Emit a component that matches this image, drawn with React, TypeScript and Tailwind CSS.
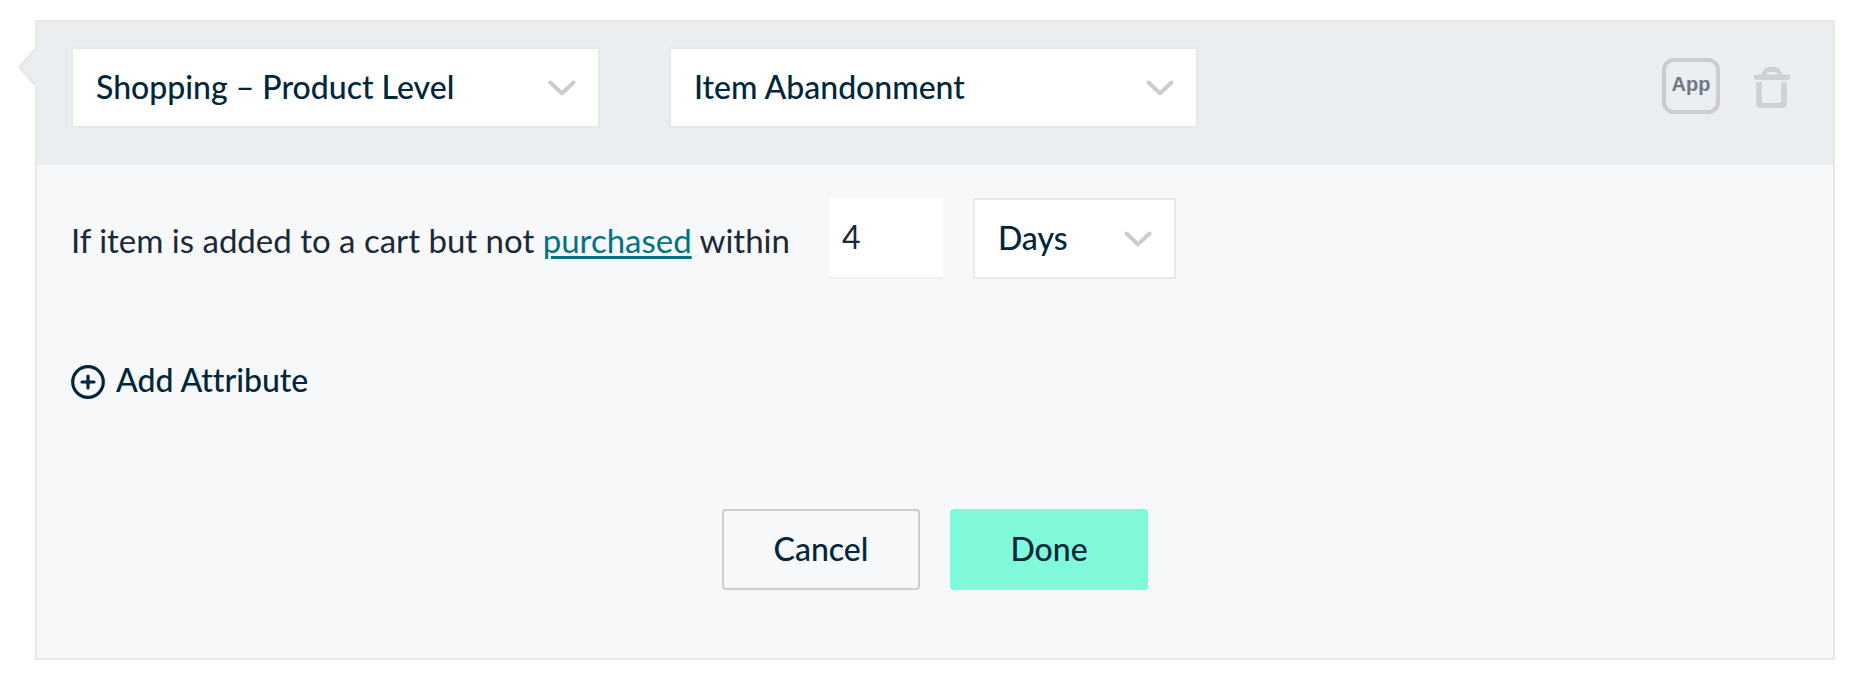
import { useState } from "react";
import type { ReactNode } from "react";

function Chevron() {
  return (
    <svg
      className="pointer-events-none absolute top-1/2 right-6 h-4 w-7 -translate-y-1/2"
      viewBox="0 0 28 16"
      fill="none"
      stroke="#cccccc"
      strokeWidth="4"
      strokeLinecap="round"
      strokeLinejoin="round"
      aria-hidden="true"
    >
      <path d="M2.5 2.5 14 13.4 25.5 2.5" />
    </svg>
  );
}

type SelectProps = {
  label: string;
  options: string[];
  className: string;
};

function Select({ label, options, className }: SelectProps) {
  return (
    <div className={`relative ${className}`}>
      <select
        aria-label={label}
        className="h-[81px] w-full appearance-none rounded-none border-2 border-[#e8e8e8] bg-white pr-14 pb-0.5 pl-[23px] text-[32px] font-medium text-[#00263a]"
      >
        {options.map((option) => (
          <option key={option}>{option}</option>
        ))}
      </select>
      <Chevron />
    </div>
  );
}

function ActionButton({ className, children }: { className: string; children: ReactNode }) {
  return (
    <button
      type="button"
      className={`h-[81px] w-[198px] rounded pb-0.5 text-[32px] font-medium text-[#00263a] ${className}`}
    >
      {children}
    </button>
  );
}

export default function App() {
  const [amount, setAmount] = useState("4");

  return (
    <main className="bg-white py-5 pr-[21px] pl-[35px] font-['Lato','Open_Sans',sans-serif] [font-variant-ligatures:none]">
      <section className="relative border-2 border-[#e8e8e8] bg-[#f7f8fa]">
        <svg
          className="absolute top-[25px] -left-[20px] h-10 w-5"
          viewBox="0 0 20 40"
          aria-hidden="true"
        >
          <path d="M20 0 18 2 2.5 20 18 38 20 40Z" fill="#ebeef1" />
          <path d="M18 2 2.5 20 18 38" fill="none" stroke="#e8e8e8" strokeWidth="2.5" />
        </svg>

        <header className="flex items-start justify-between bg-[#ebeef1] px-[34px] pt-[25px] pb-[37px]">
          <div className="flex gap-[69px]">
            <Select
              label="Event category"
              options={["Shopping – Product Level", "Shopping – Category Level"]}
              className="w-[529px]"
            />
            <Select
              label="Event"
              options={["Item Abandonment", "Item Purchase"]}
              className="w-[529px]"
            />
          </div>
          <div className="flex items-center gap-[34px] pt-[11px] pr-[9px]">
            <span className="flex h-14 w-[58px] justify-center rounded-xl border-4 border-[#cccccc] pt-[9px] font-['Liberation_Sans',sans-serif] text-[20px] leading-[26px] font-bold text-[#717784]">
              App
            </span>
            <button type="button" aria-label="Delete rule">
              <svg className="h-11 w-9" viewBox="0 0 36 44" fill="#cdd1d4" aria-hidden="true">
                <path d="M8 11C8 5.500 12 3 16 3h4c4 0 8 2.500 8 8h-4C23.500 9 22 8 20 8h-4c-2 0-3.500 1-4 3Z" />
                <rect x="0" y="10.500" width="36" height="5.500" rx="2.500" />
                <path d="M2.200 18h5.600V37q0 2 2 2h15.400q2 0 2-2V18h5.600V39q0 5-5 5H7.200q-5 0-5-5Z" />
              </svg>
            </button>
          </div>
        </header>

        <div className="px-[34px] pt-[33px] pb-[68px]">
          <div className="flex items-center">
            <p className="pt-1 text-[33px] text-[#1b2838]">
              If item is added to a cart but not{" "}
              <a
                href="#purchased"
                className="text-[#007380] underline decoration-[3px] underline-offset-[3px]"
              >
                purchased
              </a>{" "}
              within
            </p>
            <input
              aria-label="Amount of time"
              type="text"
              inputMode="numeric"
              value={amount}
              onChange={(event) => setAmount(event.target.value)}
              className="ml-10 h-[81px] w-[113px] border-b-2 border-[#eeeff2] bg-white px-3 pb-0.5 text-[32px] text-[#1b2838]"
            />
            <Select
              label="Unit of time"
              options={["Days", "Hours"]}
              className="ml-[30px] w-[203px]"
            />
          </div>

          <button
            type="button"
            className="mt-[86px] flex h-[34px] items-center gap-[11px] text-[32px] leading-[34px] font-medium text-[#00263a]"
          >
            <svg
              className="size-[34px]"
              viewBox="0 0 34 34"
              fill="none"
              stroke="currentColor"
              strokeWidth="3.2"
              strokeLinecap="round"
              aria-hidden="true"
            >
              <circle cx="17" cy="17" r="15.300" />
              <path d="M17 11v12M11 17h12" />
            </svg>
            <span className="pb-1">Add Attribute</span>
          </button>

          <div className="mt-[110px] flex justify-center gap-[30px]">
            <ActionButton className="border-2 border-[#cccdd0]">Cancel</ActionButton>
            <ActionButton className="bg-[#80f8da]">Done</ActionButton>
          </div>
        </div>
      </section>
    </main>
  );
}
